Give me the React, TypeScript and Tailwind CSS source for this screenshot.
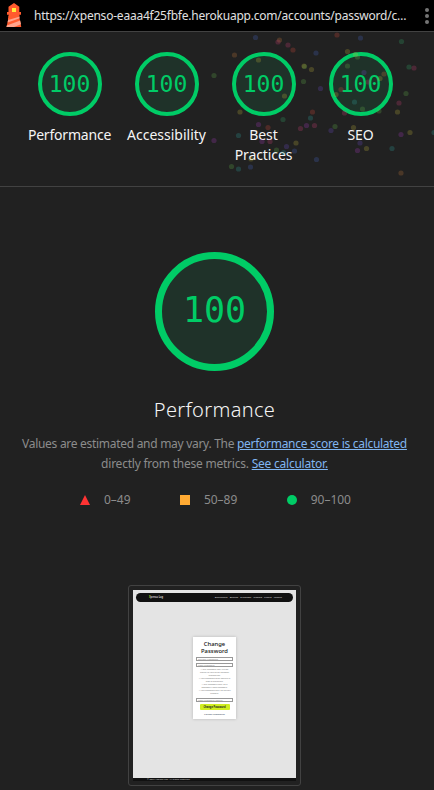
import React from "react";

type Dot = [number, number, string];

const G = "#62b34a", T = "#2fa5a0", B = "#4668c8", P = "#a83cc0", R = "#d64a3c", Y = "#c0b23c", K = "#cf3f78", O = "#c97a3a", V = "#6a4ac8", E = "#35ad6b";

// Confetti coordinates are in header space (origin at the header's top left).
const dots: Dot[] = [
  [214, 43.5, G], [214, 108.5, P], [255.5, 5.5, B], [279.5, 8, O], [278, 10, K], [288, 13, K], [293, 18, R], [316, 21, B],
  [337, 3, R], [360.5, 6, B], [347.5, 19.5, Y], [401.5, 9.5, E], [234.5, 23, O], [258.5, 28, Y], [304.5, 34.5, G],
  [311.5, 37.5, Y], [304, 34, Y], [303.5, 49.5, G], [320.5, 56.5, V], [284.5, 64, Y], [355.5, 22.5, Y], [357.5, 25, G],
  [347.5, 34, G], [364, 40.5, V], [384, 42, O], [380, 46.5, Y], [409, 35, E], [414, 36, K], [406, 61.5, G],
  [399, 71, K], [397.5, 80, Y], [341, 57.5, R], [336, 62.5, Y], [354.5, 70, T], [362.5, 77, G], [379, 79, G],
  [344.5, 81, K], [240, 80, Y], [283, 87.5, E], [312.5, 80, R], [310.5, 86, T], [258.5, 92.5, P], [268, 95.5, R],
  [300.5, 96.5, K], [306.5, 93.5, P], [314.5, 93.5, K], [238.5, 103.5, T], [262, 109.5, P], [270, 109.5, K],
  [296, 111, Y], [286.5, 114.5, V], [276.5, 118, G], [283.5, 120.5, T], [294.5, 119, B], [251, 127, Y],
  [231.5, 134.5, G], [238.5, 137, T], [250.5, 135, B], [316.5, 127.5, B], [331, 98.5, V], [335, 94.5, G],
  [353.5, 95.5, Y], [360, 111, V], [357.5, 118.5, P], [366.5, 116.5, Y], [392, 116.5, T], [401, 102.5, P],
  [410, 100.5, Y], [401, 141, O], [434, 100.5, T], [368, 50, K],
];

function Confetti() {
  return (
    <svg className="pointer-events-none absolute inset-0" width="434" height="152" viewBox="0 0 434 152">
      {dots.map(([x, y, c], i) => (
        <circle key={i} cx={x} cy={y} r="2.6" fill={c} opacity="0.25" />
      ))}
    </svg>
  );
}

function Lighthouse() {
  return (
    <svg width="18" height="25" viewBox="0 0 18 25" className="shrink-0">
      <path d="M9 0 14.3 3.8V9H16v2.8h-1.8v2L16.3 24H1.5L3.8 13.8v-2H2V9h1.5V3.8Z" fill="#ff5b2e" />
      <path d="M7 5h4v4H7Z" fill="#ffeb3b" />
      <path d="M3.4 15.2 14.1 12.6l.6 2.6L2.6 19.4ZM1.8 22.4 15.2 17.6l.8 3.6L9 24H1.5Z" fill="#ffa48c" />
      <path d="M3.4 12.4 14.2 11.8v2L3.2 17Z" fill="#ff5b2e" />
    </svg>
  );
}

function Gauge({ label, width, tracking }: { label: string; width: string; tracking: string }) {
  return (
    <div className={`flex flex-col items-center ${width}`}>
      <div className="flex size-16 items-center justify-center rounded-full border-4 border-[#00cc66] bg-[#1f3229] font-['DejaVu_Sans_Mono',monospace] text-[23px] leading-none text-[#00cc66]">
        100
      </div>
      <div className={`mt-[9px] text-center text-[14px] leading-5 text-[#f5f5f5] ${tracking}`}>{label}</div>
    </div>
  );
}

function Shot() {
  return (
    <div className="h-[201px] w-[173px] rounded-[3px] border border-[#424242] p-1">
      <div className="flex h-[191px] w-[163px] flex-col bg-[#e4e4e4] font-['Noto_Sans',sans-serif]">
        <div className="mx-[3px] mt-[3px] flex h-[9px] shrink-0 items-center justify-between rounded-full bg-[#111] pr-[11px] pl-[13px] text-[2.5px] leading-none text-[#ddd]">
          <span className="font-semibold"><span className="text-[#c8e020]">X</span>penso Log</span>
          <span className="flex gap-[2px]">
            <span>Dashboard</span><span>Budget</span><span>Expenses</span><span>Income</span><span>Profile</span><span>Logout</span>
          </span>
        </div>
        <div className="mt-[35px] ml-[60px] flex h-[82px] w-[43px] flex-col items-center bg-white shadow-[0_0_3px_rgba(0,0,0,0.2)]">
          <div className="mt-[4px] text-center text-[5.8px] leading-[6.5px] font-medium tracking-[0.05px] text-[#111]">Change<br />Password</div>
          <div className="mt-[3px] h-[4px] w-[37px] shrink-0 border-[0.5px] border-[#999] pl-px text-[2.4px] leading-[2.5px] text-[#888]">Current Password</div>
          <div className="mt-[2px] h-[4px] w-[37px] shrink-0 border-[0.5px] border-[#999] pl-px text-[2.4px] leading-[2.5px] text-[#888]">New Password</div>
          <ul className="mt-px h-[30px] w-[31px] shrink-0 text-center text-[2.1px] leading-[3px] whitespace-nowrap text-[#777]">
            <li>• Your password can't be too<br />similar to your other personal<br />information.</li>
            <li>• Your password must contain at<br />least 8 characters.</li>
            <li>• Your password can't be a<br />commonly used password.</li>
            <li>• Your password can't be entirely<br />numeric.</li>
          </ul>
          <div className="h-[4px] w-[37px] shrink-0 border-[0.5px] border-[#999] pl-px text-[2.4px] leading-[2.5px] text-[#888]">New Password (again)</div>
          <div className="mt-[2px] h-[6px] w-[30px] shrink-0 rounded-[1px] bg-[#d0ee20] text-center text-[2.5px] leading-[6px] font-bold text-[#222]">Change Password</div>
          <div className="mt-[3px] text-[2.5px] leading-[3px] text-[#345]">Forgot Password?</div>
        </div>
        <div className="mt-auto h-[3px] shrink-0 bg-[#111] pl-[14px] text-[2.3px] leading-[3px] text-[#ccc]">© 2024 Xpenso Log. All Rights Reserved.</div>
      </div>
    </div>
  );
}

export default function App() {
  return (
    <div className="flex h-[790px] w-[434px] flex-col overflow-hidden bg-[#212121] font-['Noto_Sans',sans-serif]">
      <div className="flex h-8 shrink-0 items-center border-b border-[#424242] bg-black pl-[5px]">
        <Lighthouse />
        <div className="ml-[11px] w-[380px] text-[12px] leading-4 tracking-[-0.22px] whitespace-nowrap text-[#e0e0e0]">https://xpenso-eaaa4f25fbfe.herokuapp.com/accounts/password/c…</div>
        <svg width="6" height="16" viewBox="0 0 6 16" className="ml-[10px] shrink-0" fill="#757575">
          <circle cx="3" cy="2" r="2" /><circle cx="3" cy="8" r="2" /><circle cx="3" cy="14" r="2" />
        </svg>
      </div>
      <div className="relative flex h-[155px] shrink-0 border-b border-[#424242] pt-5 pl-[21px]">
        <Gauge label="Performance" width="w-[97px]" tracking="tracking-[-0.2px]" />
        <Gauge label="Accessibility" width="w-[97px]" tracking="tracking-[0px]" />
        <Gauge label="Best Practices" width="w-[97px] px-3" tracking="tracking-[-0.1px]" />
        <Gauge label="SEO" width="w-[97px]" tracking="tracking-[-0.1px]" />
        <Confetti />
      </div>
      <div className="flex w-[429px] flex-col items-center pt-[65px]">
        <div className="flex size-[119px] items-center justify-center rounded-full border-[7px] border-[#00cc66] bg-[#1f3229] pb-[2px] font-['DejaVu_Sans_Mono',monospace] text-[35px] leading-none text-[#00cc66]">100</div>
        <h1 className="mt-6 text-[20px] leading-[30px] font-light tracking-[0.35px] text-[#f5f5f5]">Performance</h1>
        <div className="mt-[9px] text-center text-[12px] leading-5 tracking-[-0.29px] whitespace-nowrap text-[#8c8c8c]">
          <div>Values are estimated and may vary. The <a className="text-[#80b5f0] underline">performance score is calculated</a></div>
          <div className="tracking-[-0.23px]">directly from these metrics. <a className="text-[#80b5f0] underline">See calculator.</a></div>
        </div>
        <div className="mt-4 ml-[2px] flex w-[271px] items-center justify-between text-[12px] leading-5 text-[#8c8c8c]">
          <span className="flex items-center gap-[14px]"><svg width="10" height="10"><path d="M5 0 10 10H0Z" fill="#ff3333" /></svg>0–49</span>
          <span className="flex items-center gap-[14px]"><i className="size-[10px] bg-[#ffaa33]" />50–89</span>
          <span className="flex items-center gap-[14px]"><i className="size-[10px] rounded-full bg-[#00cc66]" />90–100</span>
        </div>
        <div className="mt-[75px]"><Shot /></div>
      </div>
    </div>
  );
}
